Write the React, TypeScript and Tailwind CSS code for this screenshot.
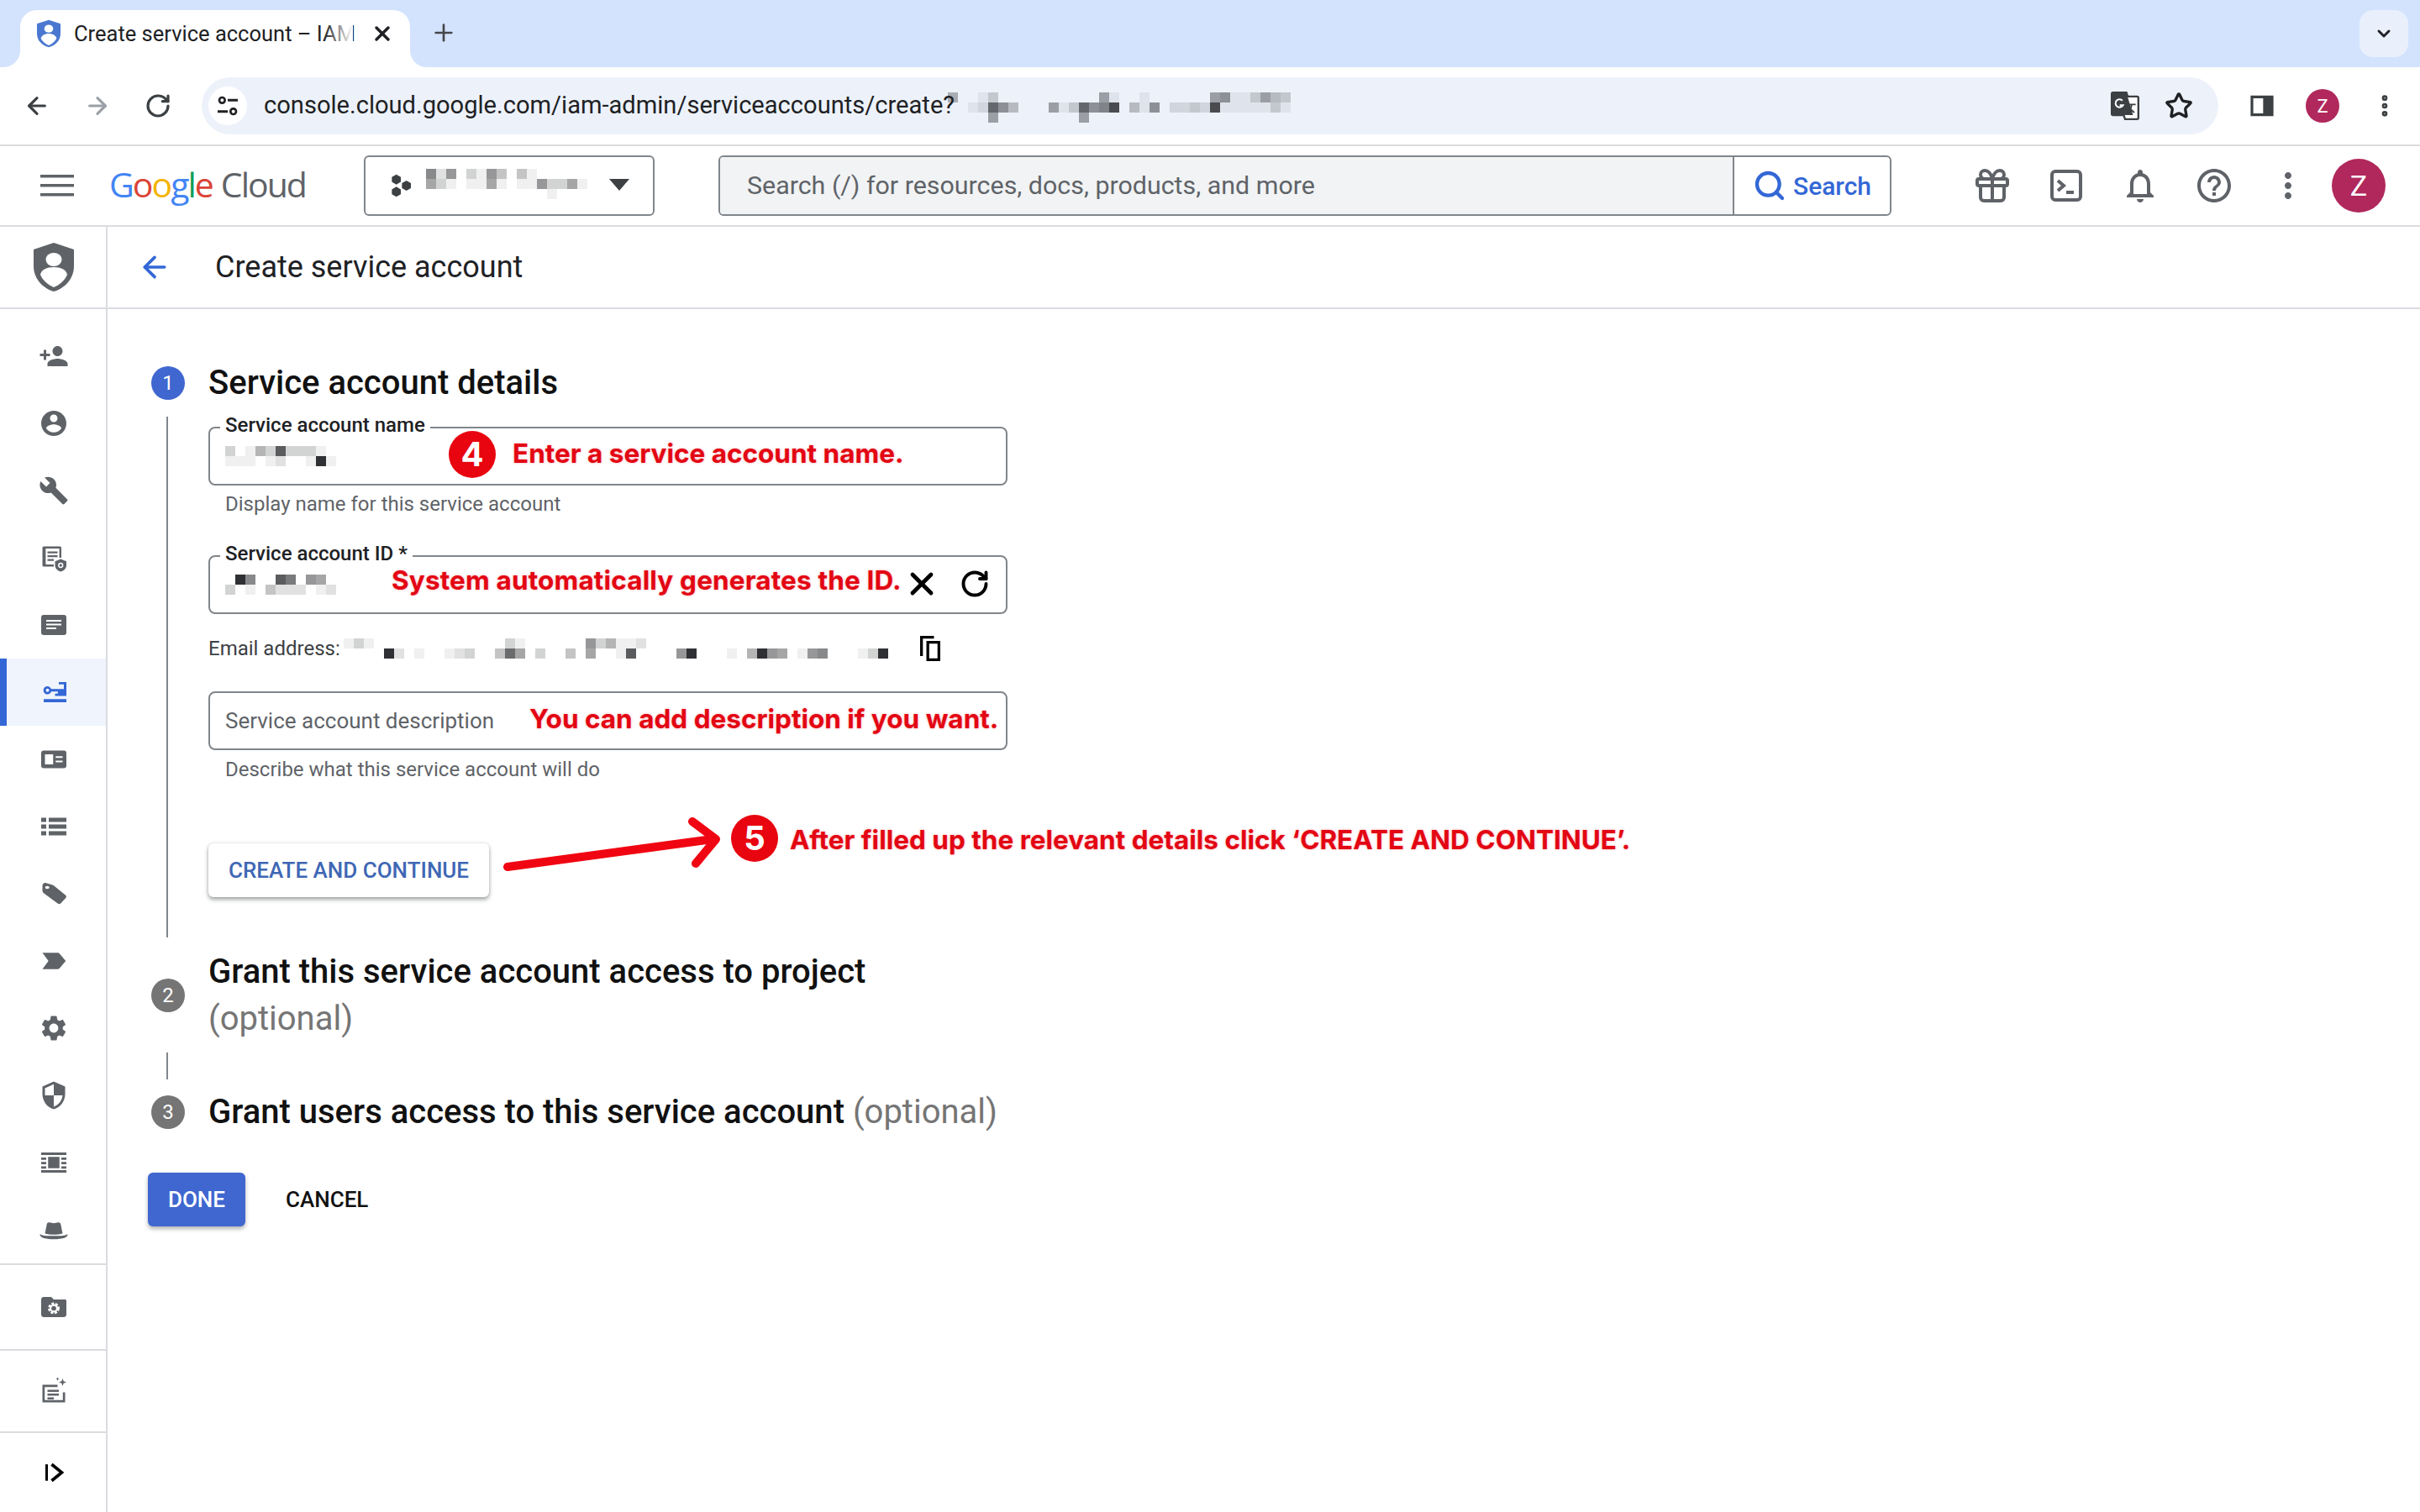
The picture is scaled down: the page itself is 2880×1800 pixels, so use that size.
import React from 'react';
import { ArrowLeft, ArrowRight, ChevronDown, EllipsisVertical, Gift, Plus, RotateCw, Search, Star, X } from 'lucide-react';

const Mosaic = ({ rows }: { rows: string[] }) => (
  <div className="flex flex-col shrink-0">
    {rows.map((row, i) => (
      <div key={i} className="flex">
        {row.split('').map((c, j) => (
          <div key={j} className="w-3 h-3" style={{ backgroundColor: `rgba(32,33,36,${parseInt(c, 16) / 15})` }} />
        ))}
      </div>
    ))}
  </div>
);

const Icon = ({ d, size = 'w-9 h-9', color = 'fill-[#5f6368]' }: { d: string; size?: string; color?: string }) => (
  <svg viewBox="0 0 24 24" className={`${size} ${color}`}>
    <path d={d} />
  </svg>
);

const Draw = ({ children, className = 'w-9 h-9' }: { children: React.ReactNode; className?: string }) => (
  <svg viewBox="0 0 24 24" className={className}>
    {children}
  </svg>
);

const sideItems: React.ReactNode[] = [
  <Icon d="M15 12c2.21 0 4-1.79 4-4s-1.79-4-4-4-4 1.79-4 4 1.79 4 4 4zm-9-2V7H4v3H1v2h3v3h2v-3h3v-2H6zm9 4c-2.67 0-8 1.34-8 4v2h16v-2c0-2.66-5.33-4-8-4z" />,
  <Icon d="M12 2C6.48 2 2 6.48 2 12s4.48 10 10 10 10-4.48 10-10S17.52 2 12 2zm0 3c1.66 0 3 1.34 3 3s-1.34 3-3 3-3-1.34-3-3 1.34-3 3-3zm0 14.2c-2.5 0-4.71-1.28-6-3.22.03-1.99 4-3.08 6-3.08 1.99 0 5.97 1.09 6 3.08-1.29 1.94-3.5 3.22-6 3.22z" />,
  <Icon d="M22.7 19l-9.1-9.1c.9-2.3.4-5-1.5-6.9-2-2-5-2.4-7.4-1.3L9 6 6 9 1.6 4.7C.4 7.1.9 10.1 2.9 12.1c1.9 1.9 4.6 2.4 6.9 1.5l9.1 9.1c.4.4 1 .4 1.4 0l2.3-2.3c.5-.4.5-1.1.1-1.4z" />,
  <Draw>
    <path d="M4 3h13a1 1 0 0 1 1 1v8h-1.6V4.6H5.6v12.8H12V19H4a1 1 0 0 1-1-1V4a1 1 0 0 1 1-1z" fill="#5f6368" />
    <path d="M7 7h8v1.5H7zM7 10h8v1.5H7zM7 13h5v1.5H7z" fill="#5f6368" />
    <path d="M17.5 13l4.5 1.8v3c0 2.6-2 4.6-4.5 5.2-2.5-.6-4.5-2.6-4.5-5.2v-3z" fill="#5f6368" />
    <circle cx="17.5" cy="18" r="1.6" fill="none" stroke="#fff" strokeWidth="1" />
  </Draw>,
  <Draw>
    <rect x="2" y="4" width="20" height="16" rx="2" fill="#5f6368" />
    <path d="M6 8h12v1.3H6zM6 11h12v1.3H6zM6 14h8v1.3H6z" fill="#fff" />
  </Draw>,
  <Draw>
    <path d="M16 4h6v11h-9v-1.8h2.2v-1.7H10a3.2 3.2 0 1 1 0-2h10V5.8h-4zM7 9.2a1.3 1.3 0 1 0 0 2.6 1.3 1.3 0 0 0 0-2.6zM4 17.5h18V20H4z" fill="#3367d6" />
  </Draw>,
  <Draw>
    <rect x="2" y="5" width="20" height="14" rx="2" fill="#5f6368" />
    <path d="M5 8h6.5v8H5zM13.5 9.5H19v1.4h-5.500zM13.500 13H19v1.400h-5.500z" fill="#fff" />
  </Draw>,
  <Icon d="M2 5h4v3.400H2zM8 5h14v3.400H8zM2 10.300h4v3.400H2zM8 10.300h14v3.400H8zM2 15.600h4V19H2zM8 15.600h14V19H8z" />,
  <Draw>
    <path d="M3 5.500C3 4 4.500 3 6 3.500l5 1.500c.6.2 1 .5 1.400.9l9 7.300c.7.6.7 1.500.1 2.100l-4 4.400c-.6.6-1.500.7-2.200.2L4 11.500c-.6-.5-1-1.200-1-2z" fill="#5f6368" />
    <ellipse cx="6.800" cy="7" rx="1.700" ry="1.200" fill="#fff" />
  </Draw>,
  <Icon d="M3 5.500h12c.7 0 1.300.3 1.700.8L21.500 12l-4.800 5.700c-.4.500-1 .8-1.700.8H3L7.800 12z" />,
  <Icon d="M19.140 12.940c.04-.3.06-.61.06-.94 0-.32-.02-.64-.07-.94l2.030-1.580c.18-.14.23-.41.12-.61l-1.920-3.320c-.12-.22-.37-.29-.59-.22l-2.390.96c-.5-.38-1.030-.7-1.620-.94l-.36-2.540c-.04-.24-.24-.41-.48-.41h-3.840c-.24 0-.43.17-.47.41l-.36 2.540c-.59.24-1.130.57-1.620.94l-2.390-.96c-.22-.08-.47 0-.59.22L2.740 8.870c-.12.21-.08.47.12.61l2.030 1.580c-.05.3-.09.63-.09.94s.02.64.07.94l-2.030 1.580c-.18.14-.23.41-.12.61l1.920 3.320c.12.22.37.29.59.22l2.390-.96c.5.38 1.030.7 1.620.94l.36 2.540c.05.24.24.41.48.41h3.840c.24 0 .44-.17.47-.41l.36-2.540c.59-.24 1.130-.56 1.620-.94l2.390.96c.22.08.47 0 .59-.22l1.920-3.320c.12-.22.07-.47-.12-.61l-2.010-1.580zM12 15.600c-1.980 0-3.600-1.620-3.600-3.600s1.620-3.600 3.600-3.600 3.600 1.620 3.600 3.600-1.620 3.600-3.600 3.600z" />,
  <Icon d="M12 1L3 5v6c0 5.550 3.840 10.740 9 12 5.160-1.260 9-6.450 9-12V5l-9-4zm0 10.990h7c-.53 4.120-3.280 7.790-7 8.940V12H5V6.300l7-3.110v8.800z" />,
  <Icon d="M2 4h20v2H2zM2 18h20v2H2zM2 8h4v1.800H2zM18 8h4v1.800h-4zM2 11.500h4v1.800H2zM18 11.500h4v1.800h-4zM2 15h4v1.800H2zM18 15h4v1.800h-4zM7.500 7.500h9v9h-9z" />,
  <Icon d="M1 15.500c1.500.8 3.500 1.300 5 1.300h12c1.500 0 3.500-.5 5-1.300.3 2.500-3.500 4-11 4s-11.300-1.500-11-4zM5 15l1.500-7.500c.2-1 1-1.500 2-1.300l3.500.7 3.500-.7c1-.2 1.800.3 2 1.300L19 15c-2 .6-4.500.8-7 .8s-5-.2-7-.8z" />,
];

const Divider = () => <div className="h-[2px] bg-[#dadce0] shrink-0" />;

const Sidebar = () => (
  <aside className="w-[128px] shrink-0 border-r-2 border-[#dadce0] flex flex-col">
    <div className="h-[98px] shrink-0 border-b-2 border-[#dadce0] flex items-center justify-center pl-[2px]">
      <svg viewBox="0 0 48 58" className="w-12 h-[58px]">
        <path d="M24 0l24 8v20c0 14-10 26-24 30C10 54 0 42 0 28V8z" fill="#5f6368" />
        <ellipse cx="24" cy="20" rx="9.500" ry="8" fill="#fff" />
        <path d="M8 38c1-6 8-9 16-9s15 3 16 9c-3 7-9 12-16 15-7-3-13-8-16-15z" fill="#fff" />
      </svg>
    </div>
    <div className="pt-4 flex flex-col">
      {sideItems.map((icon, i) => (
        <div
          key={i}
          className={
            i === 5
              ? 'h-20 flex items-center justify-center bg-[#eff4fd] border-l-[8px] border-[#3367d6]'
              : 'h-20 flex items-center justify-center pl-[2px]'
          }
        >
          <div className={i === 5 ? '-ml-[6px]' : ''}>{icon}</div>
        </div>
      ))}
    </div>
    <Divider />
    <div className="h-[100px] flex items-center justify-center pl-[2px]">
      <Draw>
        <path d="M2 6c0-1.100.9-2 2-2h6l2 2h9c1.100 0 1 .9 1 2v10c0 1.100-.9 2-2 2H4c-1.100 0-2-.9-2-2z" fill="#5f6368" />
        <circle cx="12" cy="13" r="3.400" fill="none" stroke="#fff" strokeWidth="2.400" strokeDasharray="1.800 1" />
        <circle cx="12" cy="13" r="2.600" fill="none" stroke="#fff" strokeWidth="1.400" />
      </Draw>
    </div>
    <Divider />
    <div className="h-[96px] flex items-center justify-center pl-[2px]">
      <Draw>
        <path d="M3 7h12v1.800H4.800v10.400h14.400V13H21v8H3z" fill="#5f6368" />
        <path d="M7 11h9v1.600H7zM7 14h9v1.600H7zM7 17h5v1.600H7z" fill="#5f6368" />
        <path d="M19 2l.8 2.200L22 5l-2.200.8L19 8l-.8-2.200L16 5l2.200-.8zM15 1l.4 1 .9.4-.9.4-.4 1-.4-1-.9-.4.900-.4z" fill="#5f6368" />
      </Draw>
    </div>
    <Divider />
    <div className="flex-1 flex items-center justify-center">
      <Draw>
        <path d="M6 5.500h2v13H6z" fill="#000" />
        <path d="M11 5.500l8 6.500-8 6.500" fill="none" stroke="#000" strokeWidth="2.400" />
      </Draw>
    </div>
  </aside>
);

const ChromeBar = () => (
  <>
    <div className="h-20 bg-[#d3e3fd] flex shrink-0 pl-6 pt-3 relative">
      <div className="relative w-[464px] h-[68px] bg-white rounded-t-[20px] flex items-center pl-[20px] pb-3">
        <div className="absolute -left-5 bottom-0 w-5 h-5 bg-white">
          <div className="w-5 h-5 bg-[#d3e3fd] rounded-br-[20px]" />
        </div>
        <div className="absolute -right-5 bottom-0 w-5 h-5 bg-white">
          <div className="w-5 h-5 bg-[#d3e3fd] rounded-bl-[20px]" />
        </div>
        <svg viewBox="0 0 24 28" className="w-7 h-[34px] shrink-0 mr-[16px]">
          <path d="M12 0l12 4v10c0 7-5 12-12 14C5 26 0 21 0 14V4z" fill="#4a78d0" />
          <ellipse cx="12" cy="9" rx="4.500" ry="4" fill="#fff" />
          <path d="M4 19c.5-3 4-5 8-5s7.500 2 8 5c-1.500 3-4.500 5.500-8 7-3.500-1.500-6.500-4-8-7z" fill="#fff" />
        </svg>
        <div className="relative w-[332px] whitespace-nowrap text-[25.500px] text-[#202124]">
          Create service account – IAM
          <div className="absolute right-0 top-0 bottom-0 w-[34px] bg-gradient-to-r from-transparent to-white" />
        </div>
        <X className="w-7 h-7 ml-[21px] text-[#202124]" strokeWidth={3} />
      </div>
      <Plus className="w-8 h-8 ml-[24px] mt-[11px] text-[#44474a]" strokeWidth={2} />
      <div className="ml-auto mr-[14px] w-[58px] h-14 rounded-[16px] bg-[#e9f0fc] flex items-center justify-center">
        <ChevronDown className="w-6 h-6 text-[#202124]" strokeWidth={3} />
      </div>
    </div>
    <div className="h-[92px] bg-white flex items-center shrink-0 rounded-t-[16px] pl-[28px] relative">
      <ArrowLeft className="w-8 h-8 text-[#3c4043]" strokeWidth={2.400} />
      <ArrowRight className="w-8 h-8 ml-[40px] text-[#9aa0a6]" strokeWidth={2.400} />
      <RotateCw className="w-8 h-8 ml-[40px] text-[#3c4043]" strokeWidth={2.400} />
      <div className="ml-[36px] w-[2400px] h-[68px] rounded-full bg-[#edf2fa] flex items-center pl-2 pr-[30px]">
        <div className="w-[46px] h-[46px] rounded-full bg-white flex items-center justify-center shrink-0">
          <svg viewBox="0 0 24 24" className="w-8 h-8">
            <circle cx="7" cy="7" r="2.500" fill="none" stroke="#202124" strokeWidth="2" />
            <path d="M12 7h9M3 17h9" stroke="#202124" strokeWidth="2.200" />
            <circle cx="17" cy="17" r="2.500" fill="none" stroke="#202124" strokeWidth="2" />
          </svg>
        </div>
        <span className="ml-[20px] text-[29.100px] text-[#202124] whitespace-nowrap">console.cloud.google.com/iam-admin/serviceaccounts/create?</span>
        <div className="-ml-[8px] mt-[4px]">
          <Mosaic
            rows={[
              '5001300000000006100100000067113643',
              '0012a74000613a78c041702232c1111131',
              '0000600000000600000000000000000000',
            ]}
          />
        </div>
        <div className="ml-auto flex items-center gap-[28px]">
          <svg viewBox="0 0 24 24" className="w-[38px] h-[38px]">
            <path d="M3 2h10l1 3h7a1 1 0 0 1 1 1v15a1 1 0 0 1-1 1h-9l-1-3H3a1 1 0 0 1-1-1V3a1 1 0 0 1 1-1z" fill="#fff" stroke="#3c4043" strokeWidth="1.500" />
            <path d="M3 2h10l5 17H3a1 1 0 0 1-1-1V3a1 1 0 0 1 1-1z" fill="#3c4043" />
            <path d="M10 8a3 3 0 1 0 .5 3.500H8" fill="none" stroke="#fff" strokeWidth="1.300" />
            <path d="M14 11h6M17 11c-.3 2.500-1.500 4.500-3 6M15 13c1 1.500 2.500 3 4 4" fill="none" stroke="#3c4043" strokeWidth="1.200" />
          </svg>
          <Star className="w-[34px] h-[34px] text-[#202124]" strokeWidth={2.400} />
        </div>
      </div>
      <svg viewBox="0 0 24 24" className="w-8 h-8 ml-[36px]">
        <path d="M3 4h18v16H3z" fill="none" stroke="#3c4043" strokeWidth="2.400" />
        <path d="M13 4h8v16h-8z" fill="#3c4043" />
      </svg>
      <div className="ml-[36px] w-10 h-10 rounded-full bg-[#b0285c] text-white text-[22px] flex items-center justify-center">Z</div>
      <EllipsisVertical className="w-8 h-8 ml-[38px] text-[#3c4043]" strokeWidth={3} />
    </div>
  </>
);

const CloudHeader = () => (
  <header className="h-[98px] shrink-0 border-y-2 border-[#dadce0] flex items-center bg-white">
    <svg viewBox="0 0 40 30" className="w-10 h-[30px] ml-[48px] shrink-0">
      <path d="M0 2h40v3.600H0zM0 13h40v3.600H0zM0 24h40v3.600H0z" fill="#5f6368" />
    </svg>
    <div className="ml-[42px] -mt-[3px] w-[243px] text-[41px] leading-none font-['Open_Sans',sans-serif] tracking-[-2px] whitespace-nowrap">
      <span className="text-[#4285f4]">G</span>
      <span className="text-[#db4437]">o</span>
      <span className="text-[#f4b400]">o</span>
      <span className="text-[#4285f4]">g</span>
      <span className="text-[#0f9d58]">l</span>
      <span className="text-[#db4437]">e</span>
      <span className="text-[#5f6368] ml-[10px]">Cloud</span>
    </div>
    <div className="ml-[60px] w-[346px] h-[72px] border-2 border-[#80868b] rounded-[6px] flex items-center pl-[26px] relative">
      <svg viewBox="0 0 24 24" className="w-8 h-8 shrink-0">
        <path d="M8 2l4 2.300v4.400L8 11 4 8.700V4.300zM8 13l4 2.300v4.400L8 22l-4-2.300v-4.400zM17 7.500l4 2.300v4.400l-4 2.300-4-2.300V9.800z" fill="#3c4043" />
      </svg>
      <div className="ml-[14px] -mt-[4px]">
        <Mosaic rows={['8270317404100000', '6310116101173361', '0000000000001000']} />
      </div>
      <svg viewBox="0 0 24 14" className="absolute right-[28px] top-[26px] w-6 h-[14px]">
        <path d="M0 0h24L12 14z" fill="#3c4043" />
      </svg>
    </div>
    <div className="ml-[76px] w-[1396px] h-[72px] border-2 border-[#80868b] rounded-[6px] flex overflow-hidden">
      <div className="w-[1207px] bg-[#f1f3f4] border-r-2 border-[#80868b] flex items-center pl-[32px] text-[30.400px] text-[#5f6368]">
        Search (/) for resources, docs, products, and more
      </div>
      <div className="flex-1 flex items-center justify-center gap-[8px] text-[#3367d6] text-[30px] font-medium">
        <Search className="w-10 h-10" strokeWidth={2.600} />
        Search
      </div>
    </div>
    <div className="ml-[96px] flex items-center gap-10">
      <Gift className="w-12 h-12 text-[#5f6368]" strokeWidth={2} />
      <svg viewBox="0 0 24 24" className="w-12 h-12">
        <rect x="3.500" y="3.500" width="17" height="17" rx="2" fill="none" stroke="#5f6368" strokeWidth="2" />
        <path d="M7 9l3.500 3L7 15M12 16h4.500" fill="none" stroke="#5f6368" strokeWidth="2" />
      </svg>
      <Icon size="w-12 h-12" d="M12 22c1.100 0 2-.9 2-2h-4c0 1.100.9 2 2 2zm6-6v-5c0-3.070-1.630-5.640-4.500-6.320V4c0-.83-.67-1.500-1.500-1.500s-1.500.67-1.500 1.500v.68C7.640 5.360 6 7.920 6 11v5l-2 2v1h16v-1l-2-2zm-2 1H8v-6c0-2.480 1.510-4.500 4-4.500s4 2.020 4 4.500v6z" />
      <Icon size="w-12 h-12" d="M11 18h2v-2h-2v2zm1-16C6.480 2 2 6.480 2 12s4.480 10 10 10 10-4.480 10-10S17.520 2 12 2zm0 18c-4.410 0-8-3.590-8-8s3.590-8 8-8 8 3.590 8 8-3.590 8-8 8zm0-14c-2.210 0-4 1.790-4 4h2c0-1.100.9-2 2-2s2 .9 2 2c0 2-3 1.750-3 5h2c0-2.250 3-2.500 3-5 0-2.210-1.790-4-4-4z" />
      <Icon size="w-12 h-12" d="M12 8c1.100 0 2-.9 2-2s-.9-2-2-2-2 .9-2 2 .9 2 2 2zm0 2c-1.100 0-2 .9-2 2s.9 2 2 2 2-.9 2-2-.9-2-2-2zm0 6c-1.100 0-2 .9-2 2s.9 2 2 2 2-.9 2-2-.9-2-2-2z" />
    </div>
    <div className="ml-[28px] w-16 h-16 rounded-full bg-[#b0285c] text-white text-[34px] flex items-center justify-center">Z</div>
  </header>
);

const StepDot = ({ n, active }: { n: number; active?: boolean }) => (
  <div className={`w-10 h-10 rounded-full shrink-0 text-white text-[24px] flex items-center justify-center ${active ? 'bg-[#3f67cf]' : 'bg-[#757575]'}`}>{n}</div>
);

const Field = ({ label, children }: { label?: string; children: React.ReactNode }) => (
  <div className="relative w-[951px] h-[70px] border-2 border-[#80868b] rounded-[8px] flex items-center pl-[18px]">
    {label && (
      <span className="absolute left-[12px] -top-[19px] bg-white px-[6px] text-[24px] leading-[30px] font-medium text-[#202124]">{label}</span>
    )}
    {children}
  </div>
);

const Helper = ({ children }: { children: React.ReactNode }) => (
  <div className="h-8 pl-5 text-[24px] leading-8 text-[#5f6368]">{children}</div>
);

// red callouts painted on top of the screenshot
const callout = "absolute font-['Inter',sans-serif] font-bold text-[#e30613] text-[31.500px] whitespace-nowrap [text-shadow:0_0_3px_rgba(227,6,19,0.35)]";

const Badge = ({ n, className }: { n: number; className: string }) => (
  <div className={`absolute w-14 h-14 rounded-full bg-[#e8050f] text-white text-[40px] font-bold font-['Inter',sans-serif] flex items-center justify-center ${className}`}>{n}</div>
);

const Form = () => (
  <main className="flex-1 flex flex-col relative">
    <div className="h-[98px] shrink-0 border-b-2 border-[#dadce0] flex items-center pl-[36px]">
      <ArrowLeft className="w-10 h-10 text-[#3367d6]" strokeWidth={2.200} />
      <h1 className="ml-[52px] text-[36px] text-[#202124]">Create service account</h1>
    </div>

    <div className="pt-[64px] pl-[52px]">
      <div className="flex items-center h-12 gap-[28px]">
        <StepDot n={1} active />
        <h2 className="text-[40px] font-medium text-[#111]">Service account details</h2>
      </div>
      <div className="ml-[18px] mt-[16px] h-[620px] border-l-2 border-[#80868b] pl-[48px] pt-[12px]">
        <Field label="Service account name">
          <Mosaic rows={['30153b33310', '111012001e1']} />
        </Field>
        <div className="mt-[6px]">
          <Helper>Display name for this service account</Helper>
        </div>
        <div className="mt-[45px]">
          <Field label="Service account ID *">
            <Mosaic rows={['0e800b90760', '30104222012']} />
            <X className="absolute left-[825px] top-[10px] w-11 h-11 text-black" strokeWidth={2.600} />
            <RotateCw className="absolute left-[892px] top-[14px] w-9 h-9 text-black" strokeWidth={2.600} />
          </Field>
        </div>
        <div className="mt-[21px] h-10 flex items-center text-[24px] text-[#3c4043]">
          <span>Email address:</span>
          <div className="ml-[4px]">
            <Mosaic
              rows={[
                '13100000000000003100000073511200000000000000000000000',
                '0000e20100123004a60300406001b00007e000105e76017800013e',
              ]}
            />
          </div>
          <svg viewBox="0 0 24 24" className="w-9 h-9 ml-[32px]">
            <path d="M4 2h11v2.200H6.200V18H4z" fill="#000" />
            <path d="M9 6h11v16H9zm2.200 2.200v11.600h6.600V8.200z" fill="#000" />
          </svg>
        </div>
        <div className="mt-[31px]">
          <Field>
            <span className="text-[26px] text-[#5f6368]">Service account description</span>
          </Field>
        </div>
        <div className="mt-[7px]">
          <Helper>Describe what this service account will do</Helper>
        </div>
        <button className="mt-[72px] w-[334px] h-16 rounded-[6px] bg-white text-[#3f67b5] text-[26px] font-medium shadow-[0_3px_5px_rgba(60,64,67,0.45),0_0_4px_rgba(60,64,67,0.15)]">
          CREATE AND CONTINUE
        </button>
      </div>

      <div className="mt-[13px] h-[112px] flex items-center gap-[28px]">
        <StepDot n={2} />
        <h2 className="text-[40px] leading-[56px] font-medium text-[#111]">
          Grant this service account access to project
          <br />
          <span className="font-normal text-[#757575]">(optional)</span>
        </h2>
      </div>
      <div className="ml-[18px] mt-[12px] h-8 border-l-2 border-[#80868b]" />
      <div className="mt-[15px] h-12 flex items-center gap-[28px]">
        <StepDot n={3} />
        <h2 className="text-[40px] font-medium text-[#111] whitespace-nowrap">
          Grant users access to this service account <span className="font-normal text-[#757575]">(optional)</span>
        </h2>
      </div>
      <div className="-ml-[4px] mt-[48px] flex items-center">
        <button className="w-[116px] h-16 rounded-[6px] bg-[#3f67cf] text-white text-[26px] font-medium shadow-[0_3px_5px_rgba(60,64,67,0.4)]">DONE</button>
        <button className="ml-[48px] text-[26px] font-medium text-[#111]">CANCEL</button>
      </div>
    </div>

    {/* annotations, coordinates relative to this panel (origin 128,270) */}
    <Badge n={4} className="left-[406px] top-[243px]" />
    <span className={`${callout} left-[482px] top-[246px]`}>Enter a service account name.</span>
    <span className={`${callout} left-[338px] top-[397px] tracking-[0.15px]`}>System automatically generates the ID.</span>
    <span className={`${callout} left-[502px] top-[562px]`}>You can add description if you want.</span>
    <svg viewBox="0 0 270 70" className="absolute left-[470px] top-[700px] w-[270px] h-[70px]">
      <path d="M6 62L250 29" stroke="#f00612" strokeWidth="10" strokeLinecap="round" fill="none" />
      <path d="M226 8L254 29L230 58" stroke="#f00612" strokeWidth="10" strokeLinecap="round" strokeLinejoin="round" fill="none" />
    </svg>
    <Badge n={5} className="left-[742px] top-[700px]" />
    <span className={`${callout} left-[812px] top-[706px]`}>After filled up the relevant details click ‘CREATE AND CONTINUE’.</span>
  </main>
);

const App = () => (
  <div className="w-[2880px] h-[1800px] flex flex-col overflow-hidden bg-white font-['Roboto',sans-serif]">
    <ChromeBar />
    <CloudHeader />
    <div className="flex-1 flex min-h-0">
      <Sidebar />
      <Form />
    </div>
  </div>
);

export default App;
